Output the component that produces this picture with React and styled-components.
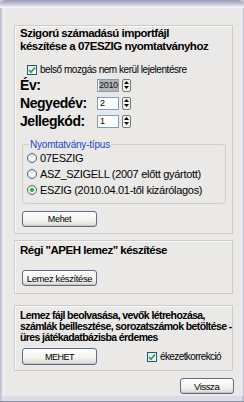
import React from "react";
import styled, { createGlobalStyle } from "styled-components";

const GlobalStyle = createGlobalStyle`
  html, body {
    margin: 0;
    padding: 0;
    background: #ebe9e8;
  }
  body {
    font-family: "Liberation Sans", Arial, sans-serif;
  }
`;

const Window = styled.div`
  width: 244px;
  height: 402px;
  display: flex;
  flex-direction: column;
  background: #c9c9d6;
  overflow: hidden;
`;

const TitleStrip = styled.div`
  height: 7px;
  flex: none;
  border-radius: 6px 6px 0 0;
  background: linear-gradient(#9a9ab2, #c6c6d6 60%, #eeeef4);
  border-bottom: 1px solid #f4f4f8;
`;

const Frame = styled.div`
  flex: 1;
  display: flex;
  padding: 0 3px 5px 3px;
  background: linear-gradient(90deg, #b6b6c8, #dcdce6 2px, #dcdce6 calc(100% - 3px), #b6b6c8);
  border-bottom: 1px solid #8e8ea4;
`;

const Body = styled.div`
  flex: 1;
  display: flex;
  flex-direction: column;
  background: #ebe9e8;
  border-left: 1px solid #f8f8fa;
  padding: 17px 10px 0 10px;
`;

const Panel = styled.div`
  border: 1px solid #cdcbc8;
  box-shadow: inset 1px 1px 0 #fbfbfb;
  height: ${(p) => p.$h}px;
  margin-top: ${(p) => p.$mt || 0}px;
  padding: ${(p) => p.$pad};
  display: flex;
  flex-direction: column;
  align-items: flex-start;
  box-sizing: border-box;
  overflow: hidden;
`;

const Heading = styled.div`
  font-weight: bold;
  font-size: ${(p) => p.$size || 11.5}px;
  line-height: ${(p) => p.$lh || 13}px;
  letter-spacing: ${(p) => p.$ls ?? -0.5}px;
  white-space: nowrap;
  color: #000;
  padding-left: 5px;
`;

const CheckRow = styled.label`
  display: flex;
  align-items: center;
  gap: 3px;
  font-size: 10px;
  line-height: 11px;
  letter-spacing: ${(p) => p.$ls ?? -0.45}px;
  white-space: nowrap;
  color: #000;
  margin-left: ${(p) => p.$ml || 0}px;
  margin-top: ${(p) => p.$mt || 0}px;
`;

const Box = styled.span`
  width: 10px;
  height: 10px;
  flex: none;
  box-sizing: border-box;
  border: 1px solid #1f5a8c;
  background: linear-gradient(135deg, #e4e4df, #ffffff);
  display: inline-flex;
  align-items: center;
  justify-content: center;
`;

const FieldRow = styled.div`
  display: flex;
  align-items: center;
  height: 18px;
  padding-left: 5px;
  margin-top: ${(p) => p.$mt || 0}px;
`;

const FieldLabel = styled.span`
  width: 77px;
  flex: none;
  font-weight: bold;
  font-size: 14px;
  letter-spacing: -0.45px;
  color: #000;
`;

const Input = styled.span`
  width: 22px;
  height: 13px;
  flex: none;
  box-sizing: border-box;
  border: 1px solid #7f9db9;
  background: #fff;
  font-size: 9px;
  letter-spacing: -0.3px;
  line-height: 11px;
  padding-left: 2px;
  display: flex;
  align-items: center;
  overflow: hidden;
`;

const Selected = styled.span`
  background: #b5b5b5;
  color: #111;
  margin-left: -1px;
`;

const Spin = styled.span`
  width: 9px;
  height: 13px;
  margin-left: 3px;
  box-sizing: border-box;
  border: 1px solid #7a7a7a;
  border-radius: 2px;
  background: #f4f4f0;
  display: flex;
  flex-direction: column;
  align-items: center;
  justify-content: space-around;
`;

const Group = styled.fieldset`
  margin: 9px 3px 0 7px;
  padding: 0 0 0 4px;
  width: 204px;
  height: 65px;
  box-sizing: border-box;
  border: 1px solid #d0d0c6;
  border-radius: 3px;
  display: flex;
  flex-direction: column;
`;

const Legend = styled.legend`
  font-size: 10px;
  line-height: 11px;
  letter-spacing: -0.2px;
  color: #1b46c8;
  padding: 0 1px;
  margin-left: 2px;
`;

const RadioRow = styled.label`
  display: flex;
  align-items: center;
  gap: 3px;
  height: 16px;
  font-size: 11px;
  letter-spacing: -0.3px;
  white-space: nowrap;
  color: #000;
`;

const Circle = styled.span`
  width: 10px;
  height: 10px;
  flex: none;
  box-sizing: border-box;
  border-radius: 50%;
  border: 1px solid #41638c;
  background: radial-gradient(circle at 65% 65%, #fff, #e2e2dc);
  display: inline-flex;
  align-items: center;
  justify-content: center;
  &::after {
    content: "";
    width: 4px;
    height: 4px;
    border-radius: 50%;
    background: ${(p) => (p.$on ? "#2aa82a" : "transparent")};
  }
`;

const Button = styled.button`
  width: ${(p) => p.$w || 75}px;
  height: ${(p) => p.$h || 16}px;
  flex: none;
  margin-top: ${(p) => p.$mt || 0}px;
  margin-left: ${(p) => p.$ml || 0}px;
  padding: 0;
  border: 1px solid #5e6c8a;
  border-radius: 3px;
  background: linear-gradient(#ffffff, #f2f2ee 60%, #dcdad4);
  box-shadow: inset 0 -1px 0 #c9c6bd;
  font-family: "Liberation Sans", Arial, sans-serif;
  font-size: ${(p) => p.$fs || 9.5}px;
  letter-spacing: ${(p) => p.$ls ?? -0.4}px;
  white-space: nowrap;
  color: #000;
`;

const BottomRow = styled.div`
  display: flex;
  align-items: center;
  width: 100%;
  margin-top: 5px;
`;

const Footer = styled.div`
  display: flex;
  justify-content: flex-end;
  margin-top: 7px;
  margin-right: -1px;
`;

function Check() {
  return (
    <Box>
      <svg width="8" height="8" viewBox="0 0 8 8">
        <path d="M1 4 L3 6.2 L7 1.5" fill="none" stroke="#21a321" strokeWidth="1.6" />
      </svg>
    </Box>
  );
}

function Spinner() {
  return (
    <Spin>
      <svg width="5" height="3" viewBox="0 0 5 3">
        <path d="M0 3 L2.5 0 L5 3 Z" fill="#000" />
      </svg>
      <svg width="5" height="3" viewBox="0 0 5 3">
        <path d="M0 0 L2.5 3 L5 0 Z" fill="#000" />
      </svg>
    </Spin>
  );
}

export default function App() {
  return (
    <>
      <GlobalStyle />
      <Window>
        <TitleStrip />
        <Frame>
          <Body>
            <Panel $h={209} $pad="1px 0 0 0">
              <Heading>
                Szigorú számadású importfájl
                <br />
                készítése a 07ESZIG nyomtatványhoz
              </Heading>
              <CheckRow $ml={12} $mt={11}>
                <Check />
                belső mozgás nem kerül lejelentésre
              </CheckRow>
              <FieldRow $mt={1}>
                <FieldLabel>Év:</FieldLabel>
                <Input>
                  <Selected>2010</Selected>
                </Input>
                <Spinner />
              </FieldRow>
              <FieldRow>
                <FieldLabel>Negyedév:</FieldLabel>
                <Input>2</Input>
                <Spinner />
              </FieldRow>
              <FieldRow>
                <FieldLabel>Jellegkód:</FieldLabel>
                <Input>1</Input>
                <Spinner />
              </FieldRow>
              <Group>
                <Legend>Nyomtatvány-típus</Legend>
                <RadioRow>
                  <Circle />
                  07ESZIG
                </RadioRow>
                <RadioRow>
                  <Circle />
                  ASZ_SZIGELL (2007 előtt gyártott)
                </RadioRow>
                <RadioRow>
                  <Circle $on />
                  ESZIG (2010.04.01-től kizárólagos)
                </RadioRow>
              </Group>
              <Button $mt={7} $ml={7} $fs={9} $ls={-0.3}>Mehet</Button>
            </Panel>
            <Panel $h={54} $mt={6} $pad="3px 0 0 0">
              <Heading>Régi "APEH lemez" készítése</Heading>
              <Button $mt={13} $ml={7}>Lemez készítése</Button>
            </Panel>
            <Panel $h={66} $mt={11} $pad="4px 0 0 0">
              <Heading $size={10.5} $lh={11} $ls={-0.6}>
                Lemez fájl beolvasása, vevők létrehozása,
                <br />
                számlák beillesztése, sorozatszámok betöltése -
                <br />
                üres játékadatbázisba érdemes
              </Heading>
              <BottomRow>
                <Button $h={17} $ml={7} $fs={9} $ls={-0.5}>MEHET</Button>
                <CheckRow $ml={50} $ls={-0.6}>
                  <Check />
                  ékezetkorrekció
                </CheckRow>
              </BottomRow>
            </Panel>
            <Footer>
              <Button $w={54} $h={16}>Vissza</Button>
            </Footer>
          </Body>
        </Frame>
      </Window>
    </>
  );
}
